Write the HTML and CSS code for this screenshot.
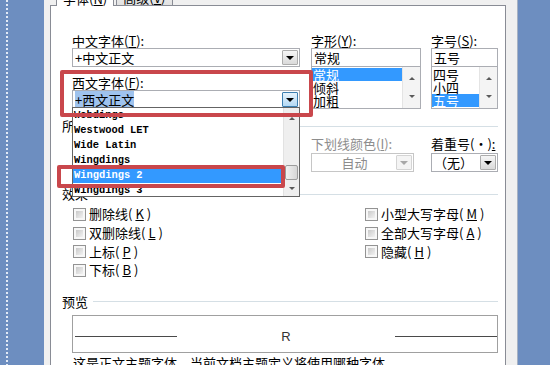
FILE: index.html
```html
<!DOCTYPE html>
<html lang="zh-CN">
<head>
<meta charset="UTF-8">
<title>字体</title>
<link rel="stylesheet" href="styles.css">
</head>
<body>
<div class="desk">
   <div class="desk-left"><div class="dots"></div></div>

   <div class="dialog">
      <div class="tabs">
         <div class="tab tab-on">字体(<u>N</u>)</div>
         <div class="tab">高级(<u>V</u>)</div>
      </div>

      <div class="page">
         <div class="fonts">
            <div class="col-latin">
               <div class="label">中文字体(<u>T</u>):</div>
               <div class="combo">
                  <div class="val">+中文正文</div>
                  <div class="btn"></div>
               </div>

               <div class="label label-gap">西文字体(<u>F</u>):</div>
               <div class="combo-wrap">
                  <div class="combo">
                     <div class="val"><span class="sel">+西文正文</span></div>
                     <div class="btn btn-hot"></div>
                  </div>

                  <div class="droplist">
                     <div class="items">
                        <div class="item">Webdings</div>
                        <div class="item">Westwood LET</div>
                        <div class="item">Wide Latin</div>
                        <div class="item">Wingdings</div>
                        <div class="item item-on">Wingdings 2</div>
                        <div class="item">Wingdings 3</div>
                     </div>
                     <div class="sb">
                        <div class="sb-up"></div>
                        <div class="sb-track"><div class="sb-thumb"></div></div>
                        <div class="sb-down"></div>
                     </div>
                  </div>
               </div>
            </div>

            <div class="col-style">
               <div class="label">字形(<u>Y</u>):</div>
               <div class="entry">常规</div>
               <div class="listbox">
                  <div class="opts">
                     <div class="opt opt-on">常规</div>
                     <div class="opt">倾斜</div>
                     <div class="opt">加粗</div>
                  </div>
                  <div class="vscroll"><span class="arr-up"></span><span class="arr-down"></span></div>
               </div>
            </div>

            <div class="col-size">
               <div class="label">字号(<u>S</u>):</div>
               <div class="entry">五号</div>
               <div class="listbox">
                  <div class="opts">
                     <div class="opt">四号</div>
                     <div class="opt">小四</div>
                     <div class="opt opt-on">五号</div>
                  </div>
                  <div class="vscroll"><span class="arr-up"></span><span class="arr-down"></span></div>
               </div>
            </div>
         </div>

         <div class="group group-all">所有文字</div>

         <div class="attrs">
            <div class="label">字体颜色(<u>C</u>):</div>
            <div class="label">下划线线型(<u>U</u>):</div>
            <div class="label dim">下划线颜色(<u>I</u>):</div>
            <div class="label">着重号(·)<u>:</u></div>

            <div class="combo combo-color">
               <div class="val">自动</div>
               <div class="btn"></div>
            </div>
            <div class="combo combo-line">
               <div class="val">（无）</div>
               <div class="btn"></div>
            </div>
            <div class="combo combo-off combo-ulcolor">
               <div class="val">自动</div>
               <div class="btn btn-off"></div>
            </div>
            <div class="combo combo-emph">
               <div class="val">（无）</div>
               <div class="btn"></div>
            </div>
         </div>

         <div class="group group-fx">效果</div>

         <div class="checks">
            <label class="check"><span class="box"></span>删除线(<u>K</u>)</label>
            <label class="check"><span class="box"></span>双删除线(<u>L</u>)</label>
            <label class="check"><span class="box"></span>上标(<u>P</u>)</label>
            <label class="check"><span class="box"></span>下标(<u>B</u>)</label>
            <label class="check"><span class="box"></span>小型大写字母(<u>M</u>)</label>
            <label class="check"><span class="box"></span>全部大写字母(<u>A</u>)</label>
            <label class="check"><span class="box"></span>隐藏(<u>H</u>)</label>
         </div>

         <div class="group group-preview">预览</div>

         <div class="preview">
            <span class="rule"></span>
            <span class="sample">R</span>
            <span class="rule"></span>
         </div>

         <div class="note">这是正文主题字体。当前文档主题定义将使用哪种字体。</div>

         <div class="mark mark-font"></div>
         <div class="mark mark-pick"></div>
      </div>
   </div>

   <div class="desk-right"></div>
</div>
</body>
</html>
```

FILE: styles.css
```css
* { box-sizing: border-box; }

html, body { margin: 0; padding: 0; }

body {
   width: 550px;
   height: 365px;
   overflow: hidden;
   background: #6d8ec0;
   color: #000;
   font: 13px/14px "Noto Sans CJK SC", sans-serif;
}

.desk {
   display: flex;
   height: 365px;
}

.desk-left {
   flex: none;
   width: 44px;
   padding-left: 6px;
}

.dots {
   width: 2px;
   height: 100%;
   background: repeating-linear-gradient(to bottom, #e2eaf6 0 2px, transparent 2px 4px);
}

.desk-right { flex: 1; }

.dialog {
   flex: none;
   width: 474px;
   padding: 0 11px 0 6px;
   background: #f0f0f0;
   border-right: 1px solid #a7b2c3;
}

/* tab strip, mostly scrolled off the top */
.tabs {
   display: flex;
   align-items: flex-end;
   height: 20px;
   margin-top: -15px;
   padding-left: 6px;
}

.tab {
   display: flex;
   align-items: flex-end;
   height: 19px;
   padding: 0 6px;
   border: 1px solid #898c95;
   border-bottom: 0;
   background: linear-gradient(#f4f4f4, #e2e2e2);
   white-space: nowrap;
}

.tab-on {
   position: relative;
   z-index: 1;
   height: 21px;
   margin: 0 2px -1px 0;
   background: #fff;
}

.page {
   position: relative;
   height: 400px;
   padding: 28px 7px 0 11px;
   background: #fff;
   border: 1px solid #898c95;
}

.label {
   height: 14px;
   white-space: nowrap;
}

.label-gap { margin-top: 9px; }

.dim { color: #8d8d8d; }

/* font pickers */
.fonts {
   display: flex;
   margin-left: 10px;
}

.col-latin { width: 228px; margin-right: 11px; }
.col-style { width: 110px; margin-right: 10px; }
.col-size { width: 67px; }

.combo-wrap { position: relative; }

.combo {
   display: flex;
   height: 19px;
   border: 1px solid #abadb3;
   background: #fff;
}

.val {
   flex: 1;
   padding-left: 2px;
   line-height: 17px;
   white-space: nowrap;
   overflow: hidden;
}

.sel { background: #9fc3ee; }

.btn {
   flex: none;
   display: flex;
   align-items: center;
   justify-content: center;
   width: 16px;
   margin: 1px;
   border: 1px solid #adadad;
   border-radius: 1px;
   background: linear-gradient(#f6f6f6, #dadada);
}

.btn::after {
   content: "";
   border-left: 4px solid transparent;
   border-right: 4px solid transparent;
   border-top: 4px solid #000;
}

.btn-hot {
   border-color: #3c7fb1;
   background: linear-gradient(#e6f3fc, #b4d9f4);
}

.btn-off {
   border-color: #d4d4d4;
   background: #f4f4f4;
}

.btn-off::after { border-top-color: #a8a8a8; }

.entry {
   height: 19px;
   padding-left: 2px;
   line-height: 17px;
   border: 1px solid #abadb3;
}

.listbox {
   display: flex;
   height: 42px;
   border: 1px solid #abadb3;
   border-top: 0;
}

.opts {
   flex: 1;
   padding-top: 1px;
}

.opt {
   height: 13px;
   line-height: 13px;
   padding-left: 1px;
}

.opt-on {
   background: #3399ff;
   color: #fff;
}

.vscroll {
   flex: none;
   display: flex;
   flex-direction: column;
   justify-content: space-between;
   align-items: center;
   width: 18px;
   padding: 10px 0 10px;
   background: #f4f4f4;
   border-left: 1px solid #e4e4e4;
}

.arr-up, .sb-up::after {
   border-left: 3px solid transparent;
   border-right: 3px solid transparent;
   border-bottom: 3px solid #5a5a5a;
}

.arr-down, .sb-down::after {
   border-left: 3px solid transparent;
   border-right: 3px solid transparent;
   border-top: 3px solid #5a5a5a;
}

/* open font list */
.droplist {
   position: absolute;
   z-index: 2;
   left: 0;
   top: 17px;
   display: flex;
   width: 228px;
   height: 90px;
   background: #fff;
   border: 1px solid #646464;
}

.items {
   flex: 1;
   font: bold 10.4px/15px "Liberation Mono", monospace;
}

.item {
   height: 15px;
   padding-left: 1px;
   white-space: nowrap;
}

.item-on {
   background: #3399ff;
   color: #fff;
}

.sb {
   flex: none;
   display: flex;
   flex-direction: column;
   width: 16px;
   background: #efefef;
   border-left: 1px solid #e2e2e2;
}

.sb-up, .sb-down {
   display: flex;
   justify-content: center;
   align-items: center;
}

.sb-up::after, .sb-down::after { content: ""; }

.sb-up { height: 20px; }
.sb-down { height: 16px; }

.sb-track {
   flex: 1;
   padding-top: 37px;
}

.sb-thumb {
   height: 15px;
   margin: 0 1px;
   border: 1px solid #9c9c9c;
   border-radius: 2px;
   background: linear-gradient(to right, #f2f2f2, #d6d6d6);
}

/* group headings with a rule */
.group {
   display: flex;
   align-items: center;
   height: 14px;
   white-space: nowrap;
}

.group::after {
   content: "";
   flex: 1;
   height: 1px;
   margin-left: 5px;
   background: #d5dfe5;
}

.group-all { margin-top: 10px; }
.group-fx { margin-top: 15px; }
.group-preview { margin-top: 15px; }

/* colour / underline row */
.attrs {
   display: grid;
   grid-template-columns: 120px 119px 120px 67px;
   row-gap: 2px;
   margin: 4px 0 0 10px;
}

.combo-color { width: 110px; }
.combo-line { width: 108px; }
.combo-ulcolor { width: 103px; }
.combo-emph { width: 67px; }

.combo-off { border-color: #c6c6c6; }

.combo-off .val {
   text-align: center;
   color: #8d8d8d;
}

/* effects */
.checks {
   display: grid;
   grid-template-columns: 292px 1fr;
   grid-template-rows: repeat(4, 18.7px);
   grid-auto-flow: column;
   margin: 4px 0 0 11px;
}

.check {
   display: flex;
   align-items: center;
   gap: 3px;
   white-space: nowrap;
}

.box {
   flex: none;
   width: 13px;
   height: 13px;
   padding: 2px;
   border: 1px solid #939393;
   background: linear-gradient(135deg, #c9c9c9, #f2f2f2) content-box, #f7f7f7;
}

/* preview */
.preview {
   display: flex;
   align-items: center;
   justify-content: space-between;
   height: 38px;
   margin: 6px 0 0 10px;
   padding: 6px 0 0 2px;
   border: 1px solid #a0a0a0;
}

.rule {
   width: 102px;
   height: 1px;
   background: #4a4a4a;
}

.sample {
   font: 13px/14px "Liberation Sans", sans-serif;
   color: #333;
}

.note {
   margin: 3px 0 0 11px;
   white-space: nowrap;
}

/* red annotation frames drawn over the dialog */
.mark {
   position: absolute;
   z-index: 3;
   border: 4px solid #c9474c;
   border-radius: 2px;
}

.mark-font { left: 9px; top: 64px; width: 253px; height: 47px; }
.mark-pick { left: 6px; top: 159px; width: 228px; height: 23px; }
```
